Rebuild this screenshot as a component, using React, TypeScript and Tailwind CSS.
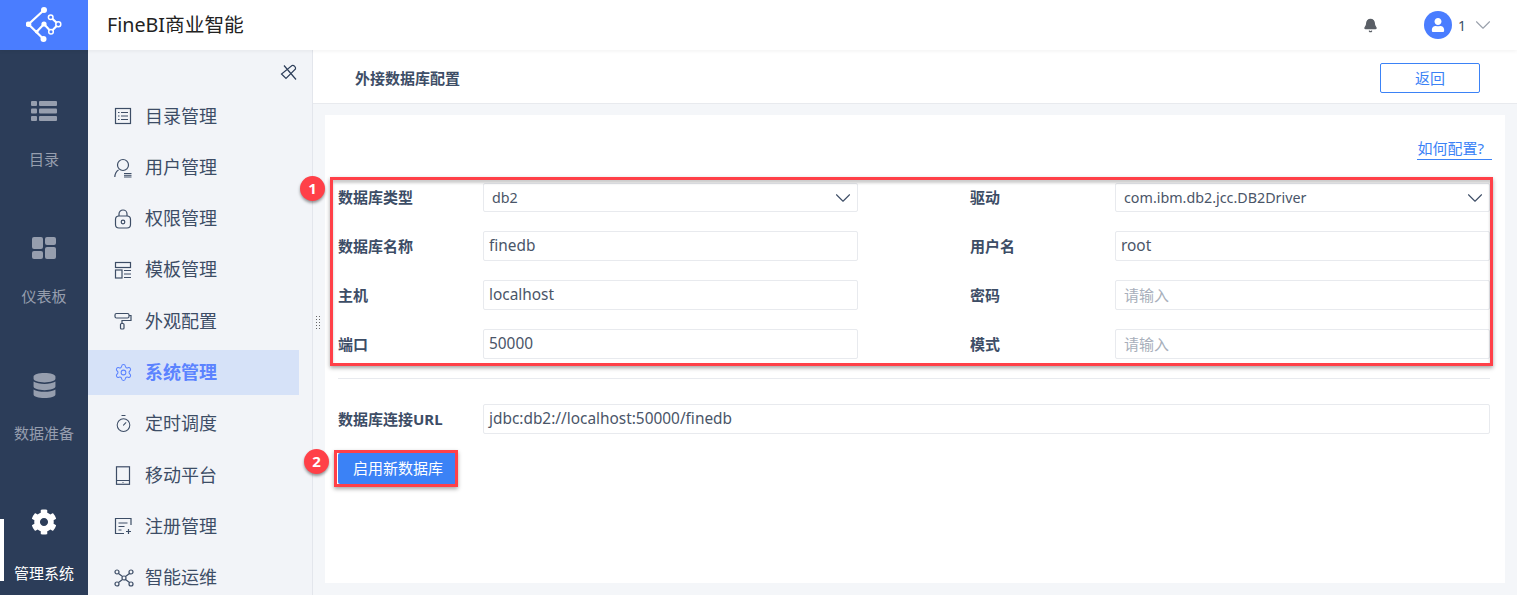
import { Bell, ChevronDown, Settings, Timer } from "lucide-react";
import { FaCog, FaDatabase, FaUser } from "react-icons/fa";
import type { ReactNode } from "react";

const font = "font-['Noto_Sans','Noto_Sans_CJK_SC',sans-serif]";

function Logo() {
  return (
    <svg width="36" height="36" viewBox="0 0 36 36" fill="none">
      <path d="M18 3 2.500 17.300 17.500 32M10.700 24.700 18 17l7 7.700 7.300-7.400-7.600-7" stroke="#fff" strokeWidth="2.200" />
      <circle cx="18" cy="3" r="3" fill="#fff" />
      <circle cx="2.500" cy="17.300" r="2.800" fill="#fff" />
      <circle cx="18" cy="17" r="2.600" fill="#fff" />
      <circle cx="10.700" cy="24.700" r="1.800" fill="#fff" />
      <circle cx="17.500" cy="32" r="3" fill="#fff" />
      <circle cx="24.700" cy="10.300" r="2.300" fill="#4a7dff" stroke="#fff" strokeWidth="1.500" />
      <circle cx="32.300" cy="17.300" r="2.500" fill="#4a7dff" stroke="#fff" strokeWidth="1.500" />
      <circle cx="25" cy="24.700" r="2.300" fill="#4a7dff" stroke="#fff" strokeWidth="1.500" />
    </svg>
  );
}

function ListIcon() {
  return (
    <svg width="26" height="22" viewBox="0 0 26 22" fill="#969eae">
      <rect x="0" y="1" width="6" height="5" rx="1" />
      <rect x="8" y="1" width="18" height="5" rx="1" />
      <rect x="0" y="8.500" width="6" height="5" rx="1" />
      <rect x="8" y="8.500" width="18" height="5" rx="1" />
      <rect x="0" y="16" width="6" height="5" rx="1" />
      <rect x="8" y="16" width="18" height="5" rx="1" />
    </svg>
  );
}

function BoardIcon() {
  return (
    <svg width="24" height="22" viewBox="0 0 24 22" fill="#969eae">
      <rect x="0" y="0" width="11" height="12" rx="2" />
      <rect x="13" y="0" width="11" height="8" rx="2" />
      <rect x="0" y="14" width="11" height="8" rx="2" />
      <rect x="13" y="10" width="11" height="12" rx="2" />
    </svg>
  );
}

const stroke = { fill: "none", stroke: "#3d4d66", strokeWidth: 1.2 };

const navIcons: Record<string, ReactNode> = {
  catalog: (
    <svg width="18" height="18" viewBox="0 0 18 18" {...stroke}>
      <rect x="1.500" y="1.500" width="15" height="15" />
      <path d="M4 5.500h1.500M7 5.500h7M4 9h1.500M7 9h7M4 12.500h1.500M7 12.500h7" />
    </svg>
  ),
  user: (
    <svg width="18" height="21" viewBox="0 0 18 21" {...stroke}>
      <circle cx="9" cy="8" r="5.500" />
      <path d="M4.500 13C2 14.500 1 17 .800 20" />
      <path d="M10 16.500h7.500M10 18.300h7.500M10 20h7.500" strokeWidth="1" />
    </svg>
  ),
  lock: (
    <svg width="18" height="20" viewBox="0 0 18 20" {...stroke}>
      <rect x="1.500" y="7" width="15" height="12" rx="3.500" />
      <path d="M5 7V5a4 4 0 0 1 8 0v2" />
      <circle cx="9" cy="13" r="1.800" />
    </svg>
  ),
  template: (
    <svg width="18" height="18" viewBox="0 0 18 18" {...stroke}>
      <rect x="1.500" y="1.500" width="15" height="5" />
      <rect x="1.500" y="9" width="6.500" height="8" />
      <path d="M10 9.500h7M10 13h7M10 16.500h7" />
    </svg>
  ),
  paint: (
    <svg width="18" height="18" viewBox="0 0 18 18" {...stroke}>
      <rect x="1" y="1.500" width="14" height="4.500" rx="1.500" />
      <path d="M15 3.500h2v5H8v3" />
      <rect x="6.500" y="11.500" width="3.500" height="5.500" rx="1" />
    </svg>
  ),
  gear: <Settings size={19} strokeWidth={1.3} color="#5b83ff" />,
  timer: <Timer size={19} strokeWidth={1.3} color="#3d4d66" />,
  mobile: (
    <svg width="18" height="19" viewBox="0 0 18 19" {...stroke}>
      <rect x="2.500" y="0.800" width="13" height="17.500" />
      <path d="M2.500 14.500h13M9 16v.800" />
    </svg>
  ),
  register: (
    <svg width="18" height="18" viewBox="0 0 18 18" {...stroke}>
      <path d="M17 8V1.500H1.500v15H10M4.500 6h9M4.500 9.500h6M4.500 13h3M12 14.500h5M14.500 12v5" />
    </svg>
  ),
  ops: (
    <svg width="20" height="18" viewBox="0 0 20 18" {...stroke}>
      <circle cx="3" cy="3" r="2" />
      <circle cx="17" cy="3" r="2" />
      <circle cx="3" cy="15" r="2" />
      <circle cx="17" cy="15" r="2" />
      <circle cx="10" cy="9" r="2" />
      <path d="m4.500 4.500 4 3M15.500 4.500l-4 3M4.500 13.500l4-3M15.500 13.500l-4-3" />
    </svg>
  ),
};

const railItems = [
  { label: "目录", icon: <ListIcon /> },
  { label: "仪表板", icon: <BoardIcon /> },
  { label: "数据准备", icon: <FaDatabase size={25} color="#969eae" /> },
];

const navItems = [
  { label: "目录管理", icon: "catalog" },
  { label: "用户管理", icon: "user" },
  { label: "权限管理", icon: "lock" },
  { label: "模板管理", icon: "template" },
  { label: "外观配置", icon: "paint" },
  { label: "系统管理", icon: "gear", active: true },
  { label: "定时调度", icon: "timer" },
  { label: "移动平台", icon: "mobile" },
  { label: "注册管理", icon: "register" },
  { label: "智能运维", icon: "ops" },
];

function Field({ label, value, placeholder, select }: { label: string; value?: string; placeholder?: string; select?: boolean }) {
  return (
    <div className={`flex items-center mb-[19px] ${select ? "h-[29px]" : "h-[30px]"}`}>
      <label className="w-[145px] shrink-0 text-[15px] font-bold text-[#3d4d66]">{label}</label>
      {select ? (
        <div className="flex-1 h-[29px] flex items-center justify-between border border-[#e8eaee] rounded-[2px] bg-white pl-[8px] pr-[1px] text-[14.300px] text-[#4a5568]">
          <span>{value}</span>
          <ChevronDown size={26} strokeWidth={1} color="#3d4d66" />
        </div>
      ) : (
        <div className={`flex-1 h-[30px] flex items-center border border-[#e8eaee] rounded-[2px] bg-white ${placeholder ? "pl-[8px] text-[15px] text-[#a8afbb]" : "pl-[5px] text-[15.400px] text-[#4a5568]"}`}>
          {value ?? placeholder}
        </div>
      )}
    </div>
  );
}

export default function App() {
  return (
    <div className={`relative w-[1517px] h-[595px] overflow-hidden flex flex-col bg-[#f4f6f9] ${font}`}>
      <header className="relative z-10 h-[50px] shrink-0 flex items-center bg-white shadow-[0_1px_4px_rgba(0,0,0,0.06)]">
        <div className="w-[88px] h-full bg-[#4a7dff] flex items-center justify-center">
          <Logo />
        </div>
        <h1 className="ml-[19px] text-[19.700px] text-[#222]">FineBI商业智能</h1>
        <Bell size={15} fill="#5a5f66" color="#5a5f66" className="ml-auto mr-[46px]" />
        <div className="w-[28px] h-[28px] rounded-full bg-[#4a7dff] flex items-center justify-center">
          <FaUser size={14} color="#fff" />
        </div>
        <span className="ml-[6px] text-[14px] text-[#3d4d66]">1</span>
        <ChevronDown size={26} strokeWidth={1} color="#9aa1ac" className="ml-[4px] mr-[21px]" />
      </header>

      <div className="flex flex-1 min-h-0">
        <aside className="relative w-[88px] shrink-0 bg-[#2c3d59] flex flex-col">
          {railItems.map((item) => (
            <div key={item.label} className="flex flex-col items-center h-[137px] pt-[48px]">
              <div className="h-[26px] flex items-center justify-center">{item.icon}</div>
              <div className="mt-[24px] text-[15px] text-[#969eae]">{item.label}</div>
            </div>
          ))}
          <div className="flex flex-col items-center pt-[48px]">
            <FaCog size={26} color="#fff" />
            <div className="mt-[27px] text-[15px] text-white">管理系统</div>
          </div>
          <div className="absolute left-0 top-[469px] w-[4px] h-[62px] bg-white" />
        </aside>

        <nav className="relative w-[225px] shrink-0 bg-[#f2f4f8] border-r border-[#e3e6ec] pr-[13px]">
          <div className="h-[43.500px] flex justify-end items-start pt-[14px]">
            <svg width="18" height="18" viewBox="0 0 18 18" fill="none" stroke="#2c3d59" strokeWidth="1.200" className="mr-[1px]">
              <path d="M12 1.500c2-.5 4 1.500 3.500 3.500L6 14.500 1.500 10zM4 1.500l12 14" />
            </svg>
          </div>
          {navItems.map((item) => (
            <div
              key={item.label}
              className={`flex items-center h-[45px] mb-[6.300px] pl-[26px] ${item.active ? "bg-[#d6e2f8] text-[#5b83ff] font-bold" : "text-[#3d4d66]"}`}
            >
              <span className="w-[31px] flex items-center">{navIcons[item.icon]}</span>
              <span className="text-[18px]">{item.label}</span>
            </div>
          ))}
          <div className="absolute right-[-8px] top-[265px] w-[5px] h-[16px] bg-[radial-gradient(#666_1px,transparent_1px)] bg-[length:3px_3px]" />
        </nav>

        <main className="flex-1 min-w-0 flex flex-col">
          <div className="h-[54px] shrink-0 flex items-center justify-between bg-white border-b border-[#e8eaee] pt-[3px] pl-[42px] pr-[37px]">
            <h2 className="text-[15px] font-bold text-[#3d4d66]">外接数据库配置</h2>
            <button className="w-[100px] h-[30px] border border-[#3b82f6] rounded-[2px] text-[15px] text-[#3b82f6]">返回</button>
          </div>

          <section className="flex-1 mx-[12px] mt-[11px] mb-[12px] bg-white pl-[13px] pr-[15px]">
            <div className="flex justify-end pt-[24px] h-[68px]">
              <a className="h-[21px] leading-[19px] text-[15px] text-[#3b82f6] border-b border-[#3b82f6] pr-[8px] mr-[-2px]">如何配置?</a>
            </div>
            <div className="grid grid-cols-2 gap-x-[112px]">
              <div>
                <Field label="数据库类型" value="db2" select />
                <Field label="数据库名称" value="finedb" />
                <Field label="主机" value="localhost" />
                <Field label="端口" value="50000" />
              </div>
              <div>
                <Field label="驱动" value="com.ibm.db2.jcc.DB2Driver" select />
                <Field label="用户名" value="root" />
                <Field label="密码" placeholder="请输入" />
                <Field label="模式" placeholder="请输入" />
              </div>
            </div>
            <div className="h-px bg-[#e8eaee] mb-[25px]" />
            <Field label="数据库连接URL" value="jdbc:db2://localhost:50000/finedb" />
            <button className="block w-[120px] h-[31px] bg-[#3b82f6] rounded-[2px] text-[15px] text-white">启用新数据库</button>
          </section>
        </main>
      </div>

      <div className="absolute left-[330px] top-[177px] w-[1163px] h-[189px] border-[3px] border-[#ff4048] shadow-[0_2px_4px_rgba(0,0,0,0.35),inset_0_3px_3px_rgba(0,0,0,0.2)] pointer-events-none" />
      <div className="absolute left-[334px] top-[450px] w-[124px] h-[37px] border-[3px] border-[#ff4048] shadow-[0_2px_4px_rgba(0,0,0,0.35)] pointer-events-none" />
      <div className="absolute left-[300px] top-[176px] w-[25px] h-[25px] rounded-full bg-[#ff4048] shadow-[0_2px_3px_rgba(0,0,0,0.4)] flex items-center justify-center text-[15px] font-bold text-white">1</div>
      <div className="absolute left-[304px] top-[449px] w-[25px] h-[25px] rounded-full bg-[#ff4048] shadow-[0_2px_3px_rgba(0,0,0,0.4)] flex items-center justify-center text-[15px] font-bold text-white">2</div>
    </div>
  );
}
